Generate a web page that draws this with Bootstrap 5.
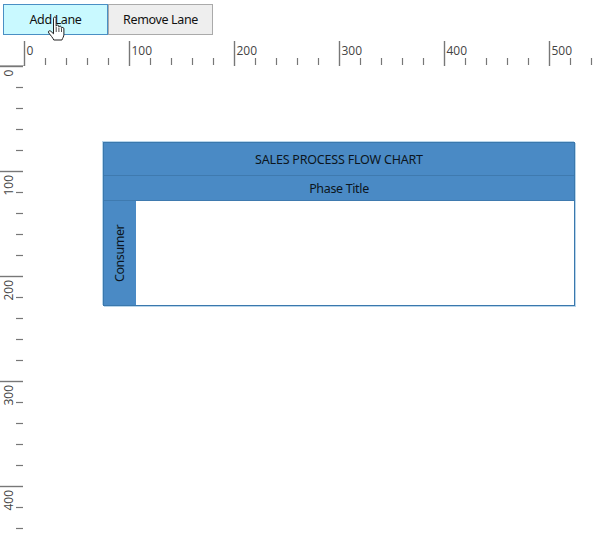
<!DOCTYPE html>
<html lang="en">
<head>
<meta charset="utf-8">
<title>Swimlane</title>
<link href="https://cdn.jsdelivr.net/npm/bootstrap@5.3.0/dist/css/bootstrap.min.css" rel="stylesheet">
<style>
html,body{height:100%;}
body{background:#fff;color:#0c1520;font-family:"Noto Sans","Open Sans",sans-serif;font-size:12.5px;letter-spacing:-.35px;overflow:hidden;}
.stage{width:600px;height:547px;}
.tool-row{padding:4px 0 0 3px;height:35px;}
.lane-btn{width:105px;height:31px;padding:0;border-radius:0;font-size:12.5px;letter-spacing:-.35px;color:#111;background:#eee;border:1px solid #aaa;line-height:29px;}
.lane-btn:hover,.lane-btn-on{background:#c9f9ff;border-color:#4a8fc4;}
.ruler-top{display:block;height:31px;}
.ruler-left{display:block;width:24px;flex:none;}
.ruler-text{font-family:"Open Sans","Noto Sans",sans-serif;font-size:12px;letter-spacing:0;fill:#444;}
.canvas-area{padding:76px 0 0 79px;}
.flow-chart{width:472px;height:164px;background:#4a8ac5;border:1px solid #3a78ad;box-shadow:1px 1px 0 0 #b9d5ea,-1px -1px 0 0 #b9d5ea;}
.chart-title{height:33px;padding-top:2px;letter-spacing:-.2px;border-bottom:1px solid #3f7aaf;}
.chart-phase{height:25px;padding-top:2px;border-bottom:1px solid #3f7aaf;}
.lane-head{width:32px;writing-mode:vertical-rl;transform:rotate(180deg);text-align:center;letter-spacing:-.45px;}
.lane-body{background:#fff;}
.hand{position:absolute;left:46px;top:16px;width:22px;height:26px;}
</style>
</head>
<body>
<div class="stage position-relative">
  <div class="tool-row d-flex">
    <button type="button" class="btn lane-btn lane-btn-on">Add Lane</button>
    <button type="button" class="btn lane-btn">Remove Lane</button>
  </div>
  <svg id="rtop" class="ruler-top" width="600" height="31" viewBox="0 0 600 31"></svg>
  <div class="d-flex">
    <svg id="rleft" class="ruler-left" width="24" height="481" viewBox="0 0 24 481"></svg>
    <div class="canvas-area flex-grow-1">
      <div class="flow-chart d-flex flex-column">
        <div class="chart-title d-flex align-items-center justify-content-center">SALES PROCESS FLOW CHART</div>
        <div class="chart-phase d-flex align-items-center justify-content-center">Phase Title</div>
        <div class="d-flex flex-grow-1">
          <div class="lane-head d-flex align-items-center justify-content-center">Consumer</div>
          <div class="lane-body flex-grow-1"></div>
        </div>
      </div>
    </div>
  </div>
  <svg class="hand" viewBox="0 0 22 26">
    <path d="M7.5 2.2c0-1.600 2.600-1.600 2.600 0v8c.3-1.500 2.600-1.500 2.700.2v.6c.4-1.400 2.500-1.200 2.600.4v.8c.5-1.200 2.500-1 2.500.6v5.500c0 2.500-1.200 3.500-2 5.700H7.800c-1.200-2.500-2.800-4.200-5-7-1.200-1.600.6-3 2-1.800l2.700 2.600z" fill="#fff" stroke="#222" stroke-width="1" stroke-linejoin="round"/>
    <path d="M10.200 11v5M12.900 11.500v4.500M15.500 12.300v3.700" fill="none" stroke="#222" stroke-width=".8"/>
  </svg>
</div>
<script>
var NS="http://www.w3.org/2000/svg";
function el(p,n,a,t){var e=document.createElementNS(NS,n);for(var k in a)e.setAttribute(k,a[k]);if(t!==undefined)e.textContent=t;p.appendChild(e);}
var top_=document.getElementById("rtop"),left_=document.getElementById("rleft");
for(var i=0;i<28;i++){
  var x=24.5+i*21;
  var maj=i%5===0;
  el(top_,"line",{x1:x,x2:x,y1:maj?6:23,y2:maj?31:30,stroke:"#777","stroke-width":maj?1.4:1.2});
  if(maj)el(top_,"text",{x:x+2,y:20,"class":"ruler-text"},String(i*20));
}
el(top_,"line",{x1:0,x2:24,y1:30.5,y2:30.5,stroke:"#aaa"});
for(var j=0;j<23;j++){
  var y=0.5+j*21;
  var m=j%5===0;
  el(left_,"line",{x1:m?0:16,x2:23,y1:y,y2:y,stroke:"#777","stroke-width":m?1.4:1.2});
  if(m&&y<481)el(left_,"text",{x:0,y:0,"class":"ruler-text",transform:"translate(13,"+(y+(j===0?10:24))+") rotate(-90)"},String(j*20));
}
</script>
</body>
</html>
